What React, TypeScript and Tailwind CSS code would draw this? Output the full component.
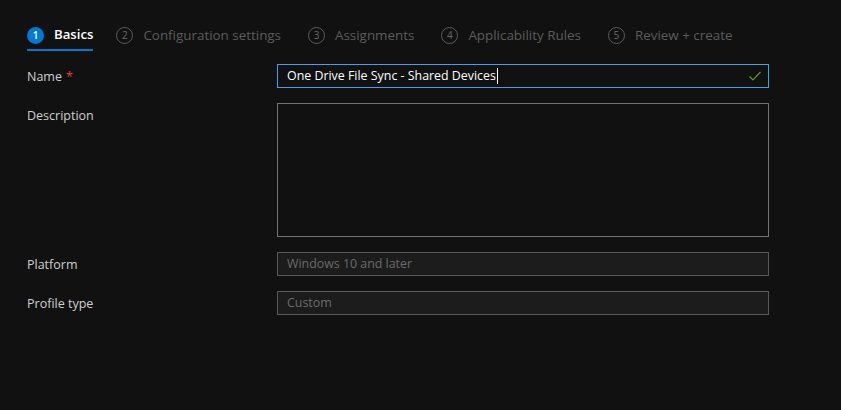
import React from 'react';

const steps = [
  { n: 1, label: 'Basics' },
  { n: 2, label: 'Configuration settings' },
  { n: 3, label: 'Assignments' },
  { n: 4, label: 'Applicability Rules' },
  { n: 5, label: 'Review + create' },
];

function Step({ n, label, active }: { n: number; label: string; active?: boolean }) {
  return (
    <div className={active ? 'relative mr-[-4px] flex h-[30px] items-center' : 'relative flex h-[30px] items-center'}>
      {active ? (
        <span className="flex h-[17px] w-[17px] items-center justify-center rounded-full bg-[#0078d4] text-[10px] font-semibold text-white">
          {n}
        </span>
      ) : (
        <span className="flex h-[17px] w-[17px] items-center justify-center rounded-full border border-[#5c5c5c] text-[10px] text-[#6a6a6a]">
          {n}
        </span>
      )}
      <span
        className={
          active
            ? 'ml-[10px] text-[13.2px] font-semibold text-white'
            : 'ml-[10px] text-[13.4px] text-[#5c5c5c]'
        }
      >
        {label}
      </span>
      {active && <span className="absolute bottom-[-1px] left-0 right-0 h-[2px] bg-[#0078d4]" />}
    </div>
  );
}

function Row({ label, required, children }: { label: string; required?: boolean; children: React.ReactNode }) {
  return (
    <div className="flex items-start">
      <div className="h-[24px] w-[250px] pt-px text-[12.5px] leading-[24px] text-[#cfcfcf]">
        {label}
        {required && <span className="ml-[4px] text-[#e0434a]">*</span>}
      </div>
      {children}
    </div>
  );
}

export default function App() {
  return (
    <div
      className="min-h-[410px] w-[841px] bg-[#111111] px-[27px] pt-[20px]"
      style={{ fontFamily: '"Open Sans", "Noto Sans", sans-serif' }}
    >
      {/* Wizard steps */}
      <div className="flex items-center gap-[27px]">
        {steps.map((s, i) => (
          <Step key={s.n} n={s.n} label={s.label} active={i === 0} />
        ))}
      </div>

      {/* Form */}
      <div className="mt-[14px] flex flex-col gap-[15px]">
        <Row label="Name" required>
          <div className="flex h-[24px] w-[492px] items-center border border-[#4a9fe4] pl-[9px] pr-[6px]">
            <span className="text-[12.4px] text-white">One Drive File Sync - Shared Devices</span>
            <span className="ml-px h-[16px] w-px bg-white" />
            <svg className="ml-auto" width="14" height="14" viewBox="0 0 14 14" fill="none">
              <path d="M1.5 7.5 L5 11 L12.5 3" stroke="#5b9e23" strokeWidth="1.2" />
            </svg>
          </div>
        </Row>
        <Row label="Description">
          <div className="h-[134px] w-[492px] border border-[#737373]" />
        </Row>
        <Row label="Platform">
          <div className="flex h-[24px] w-[492px] items-center border border-[#595959] bg-[#1c1c1c] pl-[9px] text-[12.4px] text-[#6b6b6b]">
            Windows 10 and later
          </div>
        </Row>
        <Row label="Profile type">
          <div className="flex h-[24px] w-[492px] items-center border border-[#595959] bg-[#1c1c1c] pl-[9px] text-[12.4px] text-[#6b6b6b]">
            Custom
          </div>
        </Row>
      </div>
    </div>
  );
}
